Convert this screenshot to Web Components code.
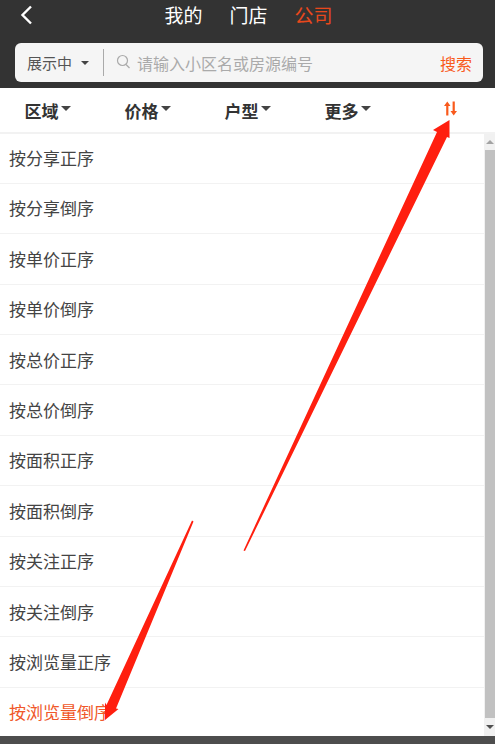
<!DOCTYPE html>
<html>
<head>
<meta charset="utf-8">
<style>
  html, body { margin: 0; height: 100%; overflow: hidden; background: #fff; }
  body { font-family: "Liberation Sans", "Noto Sans CJK SC", sans-serif; }
</style>
</head>
<body>
<sort-page>
  <top-tabs slot="top"></top-tabs>
  <search-bar slot="top"></search-bar>
  <filter-bar></filter-bar>
  <sort-list>
    <sort-row>按分享正序</sort-row>
    <sort-row>按分享倒序</sort-row>
    <sort-row>按单价正序</sort-row>
    <sort-row>按单价倒序</sort-row>
    <sort-row>按总价正序</sort-row>
    <sort-row>按总价倒序</sort-row>
    <sort-row>按面积正序</sort-row>
    <sort-row>按面积倒序</sort-row>
    <sort-row>按关注正序</sort-row>
    <sort-row>按关注倒序</sort-row>
    <sort-row>按浏览量正序</sort-row>
    <sort-row active>按浏览量倒序</sort-row>
  </sort-list>
</sort-page>

<script>
const define = (name, html) => {
  if (window.customElements.get(name)) return
  window.customElements.define(name, class extends HTMLElement {
    constructor () {
      super()
      const template = document.createElement('template')
      template.innerHTML = html
      this.attachShadow({ mode: 'open' }).appendChild(template.content.cloneNode(true))
    }
  })
}

const CJK = `"Noto Sans CJK SC", sans-serif`

define('sort-page', `
  <style>
    :host { display: flex; flex-direction: column; height: 744px; width: 495px; position: relative; overflow: hidden; }
    header { background: #333; height: 88px; flex: none; display: flex; flex-direction: column; }
    footer { height: 8px; flex: none; background: #4d4d4d; }
    svg { position: absolute; left: 0; top: 0; pointer-events: none; }
  </style>
  <header><slot name="top"></slot></header>
  <slot></slot>
  <footer></footer>
  <svg width="495" height="744" viewBox="0 0 495 744">
    <!-- the two red annotation arrows -->
    <polygon fill="#ff1f0f" points="243.5,550.5 437,132 433,130 449.5,120 449.5,138 447,137 245,551"/>
    <polygon fill="#ff1f0f" points="192,520.5 106.5,705 105,702.5 105,720 118.5,709 116,708.5 193.5,521.5"/>
  </svg>
`)

define('top-tabs', `
  <style>
    :host { display: flex; height: 43px; flex: none; position: relative; justify-content: center; gap: 27px; padding: 0 0 0 2px; box-sizing: border-box; font: 19px/30px ${CJK}; color: #fff; }
    .on { color: #e8481c; }
    svg { position: absolute; left: 20px; top: 5px; }
  </style>
  <svg width="13" height="20" viewBox="0 0 13 20"><path d="M11 1.5 2.5 10 11 18.5" fill="none" stroke="#fff" stroke-width="2.4"/></svg>
  <span>我的</span><span>门店</span><span class="on">公司</span>
`)

define('search-bar', `
  <style>
    :host { display: flex; align-items: center; height: 39px; margin: 0 12px 0 15px; padding: 0 11px 0 12px; box-sizing: border-box; background: #f5f5f5; border-radius: 6px; font: 16px ${CJK}; }
    .state { color: #555; font-size: 15px; }
    .caret { width: 0; height: 0; border: 4.5px solid transparent; border-top: 4.5px solid #444; border-bottom: 0; margin: 0 13px 0 9px; }
    .sep { width: 1px; height: 27px; background: #aaa; margin: 0 12px 0 1px; }
    svg { margin-right: 6px; flex: none; margin-bottom: 3px; }
    .hint { color: #aaa; flex: 1; }
    .go { color: #f95a1c; }
  </style>
  <span class="state">展示中</span><i class="caret"></i><i class="sep"></i>
  <svg width="15" height="15" viewBox="0 0 15 15" fill="none" stroke="#aaa" stroke-width="1.2"><circle cx="6.5" cy="6.5" r="5"/><path d="M10 10.5 13.5 14"/></svg>
  <span class="hint">请输入小区名或房源编号</span><span class="go">搜索</span>
`)

define('filter-tab', `
  <style>
    :host { display: flex; align-items: center; font: bold 17px ${CJK}; color: #333; }
    i { width: 0; height: 0; border: 5px solid transparent; border-top: 5px solid #444; border-bottom: 0; margin: -3px 0 0 2px; }
  </style>
  <slot></slot><i></i>
`)

define('filter-bar', `
  <style>
    :host { display: grid; grid-template-columns: 100px 100px 100px 119px auto; align-items: center; justify-content: start; height: 44px; padding: 0 0 0 24.5px; flex: none; box-sizing: content-box; border-bottom: 2px solid #f2f2f2; }
    svg { display: block; margin-top: -3px; }
  </style>
  <filter-tab>区域</filter-tab>
  <filter-tab>价格</filter-tab>
  <filter-tab>户型</filter-tab>
  <filter-tab>更多</filter-tab>
  <svg width="13" height="15" viewBox="0 0 13 15" fill="#f95a1c">
    <path d="M2.2 14.5V5H0L3.3 .5 6.5 5H4.4V14.5ZM8.6 .5V10H6.5L9.7 14.5 13 10H10.8V.5Z"/>
  </svg>
`)

define('sort-list', `
  <style>
    :host { flex: 1; display: flex; min-height: 0; }
    .rows { flex: 1; display: flex; flex-direction: column; }
    .bar { width: 11px; flex: none; background: #f1f1f1; display: flex; flex-direction: column; align-items: center; }
    .up, .down { width: 0; height: 0; border: 4px solid transparent; }
    .up { border-bottom: 4px solid #a3a3a3; border-top: 0; margin: 6px 0; }
    .down { border-top: 4px solid #505050; border-bottom: 0; margin: 7px 0; }
    .thumb { flex: 1; width: 10px; background: #c1c1c1; align-self: flex-end; }
  </style>
  <div class="rows"><slot></slot></div>
  <div class="bar"><i class="up"></i><div class="thumb"></div><i class="down"></i></div>
`)

define('sort-row', `
  <style>
    :host { display: flex; align-items: center; flex: none; height: 50.4px; box-sizing: border-box; padding: 0 0 1px 9px; font: 17px ${CJK}; color: #444; border-top: 1px solid #f2f2f2; }
    :host(:first-child) { border-top: 0; height: 48.8px; }
    :host([active]) { color: #f0582a; height: 49.2px; }
  </style>
  <slot></slot>
`)
</script>
</body>
</html>
